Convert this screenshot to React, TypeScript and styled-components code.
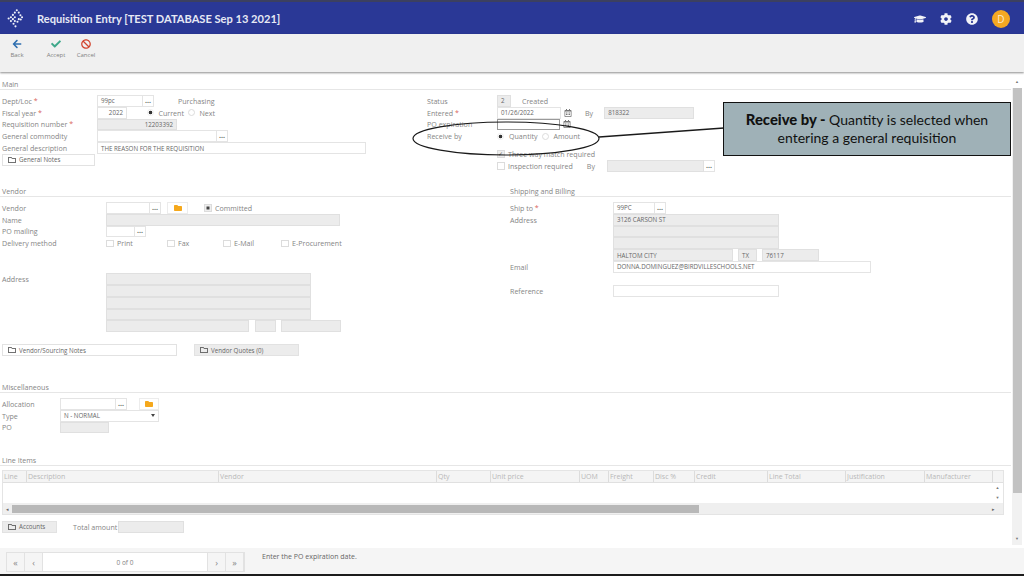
import React from 'react';
import styled, { createGlobalStyle } from 'styled-components';
import { FaArrowLeft, FaBan, FaCheck, FaCog, FaFolder, FaGraduationCap, FaQuestionCircle, FaRegCalendarAlt, FaRegFolder } from 'react-icons/fa';

const GlobalStyle = createGlobalStyle`
  html, body { margin: 0; padding: 0; background: #fff; }
  * { box-sizing: border-box; }
`;

const Page = styled.div`
  position: relative;
  width: 1024px;
  height: 576px;
  overflow: hidden;
  display: flex;
  flex-direction: column;
  font-family: "Open Sans", "Liberation Sans", sans-serif;
  font-size: 7.1px;
  color: #858585;
`;

const Header = styled.header`
  height: 34px;
  flex: none;
  display: flex;
  align-items: center;
  padding: 1px 0 0 7px;
  background: #2a3896;
  border-top: 2px solid #3c4060;
  color: #e6e8f4;
`;

const Title = styled.h1`
  margin: 0 0 0 13px;
  font-family: Lato, "Open Sans", sans-serif;
  font-size: 11.1px;
  font-weight: 700;
  flex: 1;
  white-space: nowrap;
`;

const HeaderIcons = styled.div`
  display: flex;
  align-items: center;
  gap: 14px;
  padding-right: 14px;
  font-size: 12px;
  color: #f2f3f8;
`;

const Avatar = styled.div`
  width: 18px;
  height: 18px;
  border-radius: 50%;
  background: #f4a823;
  color: #fbeccd;
  font-size: 10px;
  display: flex;
  align-items: center;
  justify-content: center;
`;

const Toolbar = styled.div`
  height: 38px;
  flex: none;
  display: flex;
  padding: 5px 0 0 2px;
  background: #f0f0f0;
  box-shadow: 0 1px 2px rgba(0, 0, 0, 0.45);
  z-index: 1;
`;

const ToolButton = styled.div<{ $ml?: number; $color: string }>`
  width: 30px;
  margin-left: ${p => p.$ml ?? 0}px;
  display: flex;
  flex-direction: column;
  align-items: center;
  gap: 2px;
  font-size: 6px;
  color: #808080;
  svg { color: ${p => p.$color}; font-size: 10px; }
`;

const Body = styled.div`
  flex: 1;
  display: flex;
  min-height: 0;
`;

const Content = styled.main`
  width: 1011px;
  flex: none;
  padding-top: 2px;
`;

const Section = styled.section<{ $h: number }>`
  height: ${p => p.$h}px;
`;

const SectionHead = styled.div<{ $left?: number }>`
  height: 16px;
  display: grid;
  grid-template-columns: ${p => p.$left ?? 1011}px 1fr;
  align-items: end;
  padding: 0 0 0.5px 2px;
  border-bottom: 1px solid #e6e6e6;
  line-height: 10px;
`;

const Columns = styled.div<{ $left: number }>`
  display: grid;
  grid-template-columns: ${p => p.$left}px 1fr;
  padding: 5px 0 0 2px;
`;

const Col = styled.div``;

const Row = styled.div`
  height: 11.8px;
  display: flex;
  align-items: center;
  white-space: nowrap;
`;

const Spacer = styled.div<{ $h: number }>`
  height: ${p => p.$h}px;
`;

const Label = styled.span<{ $w: number }>`
  width: ${p => p.$w}px;
  flex: none;
`;

const Req = styled.span`
  color: #d9645c;
`;

const Text = styled.span<{ $ml?: number; $w?: number }>`
  margin-left: ${p => p.$ml ?? 0}px;
  ${p => (p.$w ? `width: ${p.$w}px; flex: none;` : '')}
`;

const Field = styled.div<{ $w: number; $ml?: number; $ro?: boolean; $right?: boolean; $focus?: boolean }>`
  width: ${p => p.$w}px;
  height: 11.8px;
  flex: none;
  margin-left: ${p => p.$ml ?? 0}px;
  padding: 0 3px;
  display: flex;
  align-items: center;
  justify-content: ${p => (p.$right ? 'flex-end' : 'flex-start')};
  background: ${p => (p.$ro ? '#ececec' : '#fff')};
  border: 1px solid ${p => (p.$focus ? '#9a9a9a' : p.$ro ? '#e0e0e0' : '#e4e4e4')};
  font-size: 6.2px;
  color: #666;
  overflow: hidden;
`;

const Dots = styled.div`
  width: 11px;
  height: 11.8px;
  flex: none;
  display: flex;
  align-items: center;
  justify-content: center;
  background: #fff;
  border: 1px solid #e4e4e4;
  border-left: 0;
  font-size: 7px;
  font-weight: 700;
  line-height: 8px;
  color: #555;
`;

const FolderButton = styled.div<{ $ml: number; $w: number }>`
  width: ${p => p.$w}px;
  height: 11.8px;
  flex: none;
  margin-left: ${p => p.$ml}px;
  display: flex;
  align-items: center;
  justify-content: center;
  border: 1px solid #ececec;
  color: #f5a81c;
  font-size: 8px;
`;

const CalendarIcon = styled.span`
  width: 13px;
  flex: none;
  display: flex;
  justify-content: center;
  color: #777;
  font-size: 8px;
`;

const Radio = styled.span<{ $on?: boolean; $ml?: number }>`
  width: 7px;
  height: 7px;
  flex: none;
  margin: 0 5px 0 ${p => p.$ml ?? 0}px;
  border-radius: 50%;
  border: 1px solid ${p => (p.$on ? '#eee' : '#dcdcdc')};
  background: ${p => (p.$on ? 'radial-gradient(circle, #333 0 1.6px, #fff 2.1px)' : '#fff')};
`;

const Check = styled.span<{ $state?: 'tick' | 'square'; $ml?: number }>`
  width: 7.5px;
  height: 7.5px;
  flex: none;
  margin: 0 3.5px 0 ${p => p.$ml ?? 0}px;
  display: flex;
  align-items: center;
  justify-content: center;
  border: 1px solid #dcdcdc;
  background: ${p => (p.$state ? '#eee' : '#fff')};
  font-size: 6px;
  line-height: 6px;
  color: #555;
  &::after {
    content: '${p => (p.$state === 'tick' ? '✓' : '')}';
  }
  ${p => (p.$state === 'square' ? 'box-shadow: inset 0 0 0 1.5px #eee, inset 0 0 0 4px #444;' : '')}
`;

const CheckItem = styled.span<{ $w: number }>`
  width: ${p => p.$w}px;
  flex: none;
  display: flex;
  align-items: center;
`;

const NoteButton = styled.div<{ $w: number; $ml?: number; $grey?: boolean }>`
  width: ${p => p.$w}px;
  height: 11.5px;
  flex: none;
  margin-left: ${p => p.$ml ?? 0}px;
  padding-left: 5px;
  display: flex;
  align-items: center;
  gap: 3px;
  background: ${p => (p.$grey ? '#ececec' : '#fff')};
  border: 1px solid #e2e2e2;
  font-size: 6.2px;
  color: #666;
  svg { font-size: 8px; color: #444; }
`;

const Select = styled(Field)`
  justify-content: space-between;
  &::after {
    content: '';
    border: 2px solid transparent;
    border-top: 3px solid #444;
    border-bottom: 0;
  }
`;

const Table = styled.div`
  width: 1002px;
  height: 45px;
  margin: 4px 0 0 2px;
  border: 1px solid #e4e4e4;
  display: flex;
  flex-direction: column;
`;

const TableHead = styled.div`
  height: 12px;
  flex: none;
  display: flex;
  background: #f4f4f4;
  border-bottom: 1px solid #e0e0e0;
`;

const HeadCell = styled.div<{ $w: number }>`
  width: ${p => p.$w}px;
  flex: none;
  padding-left: 1px;
  border-right: 1px solid #dcdcdc;
  color: #b8b8b8;
  font-size: 7px;
  line-height: 12px;
  white-space: nowrap;
  overflow: hidden;
`;

const TableBody = styled.div`
  flex: 1;
  display: flex;
  justify-content: flex-end;
  background: #fff;
`;

const MiniScroll = styled.div`
  width: 11px;
  display: flex;
  flex-direction: column;
  justify-content: space-between;
  align-items: center;
  padding: 3px 0;
  color: #777;
  font-size: 4px;
  line-height: 4px;
`;

const HScroll = styled.div`
  height: 11px;
  flex: none;
  display: flex;
  align-items: center;
  background: #efefef;
  color: #666;
  font-size: 5px;
`;

const Arrow = styled.span`
  width: 9px;
  flex: none;
  text-align: center;
`;

const HThumb = styled.div`
  width: 687px;
  height: 8px;
  background: #b8b8b8;
`;

const AccountsRow = styled.div`
  display: flex;
  align-items: center;
  margin: 6px 0 0 2px;
`;

const Scrollbar = styled.div`
  width: 10px;
  margin: 4px 0 3px 1px;
  flex: none;
  display: flex;
  flex-direction: column;
  align-items: center;
  color: #777;
  font-size: 4px;
  line-height: 12px;
  background: linear-gradient(#fff 12px, #f1f1f1 12px);
`;

const ScrollThumb = styled.div`
  width: 9px;
  height: 405px;
  background: #c2c2c2;
`;

const ScrollDown = styled.span`
  margin-top: auto;
`;

const Footer = styled.footer`
  height: 28px;
  flex: none;
  display: flex;
  padding-top: 4px;
  background: #f5f5f5;
  border-bottom: 2px solid #1c1c1c;
`;

const Pager = styled.div`
  width: 239px;
  height: 20px;
  margin-left: 6px;
  display: flex;
  border: 1px solid #e2e2e2;
`;

const PageButton = styled.div`
  width: 18px;
  flex: none;
  display: flex;
  align-items: center;
  justify-content: center;
  border-right: 1px solid #e2e2e2;
  color: #888;
  font-size: 9px;
`;

const PageInfo = styled.div`
  flex: 1;
  display: flex;
  align-items: center;
  justify-content: center;
  background: #fff;
  border-right: 1px solid #e2e2e2;
  font-size: 6.5px;
`;

const Message = styled.div`
  margin-left: 17px;
  line-height: 9px;
  font-size: 7px;
  color: #666;
`;

const Annotation = styled.svg`
  position: absolute;
  left: 0;
  top: 0;
  pointer-events: none;
`;

const Callout = styled.div`
  position: absolute;
  left: 723px;
  top: 102px;
  width: 288px;
  height: 54px;
  padding-bottom: 2px;
  display: flex;
  flex-direction: column;
  align-items: center;
  justify-content: center;
  background: #9fb1b7;
  border: 1.5px solid #111;
  font-family: Lato, "Liberation Sans", sans-serif;
  font-size: 14px;
  line-height: 18px;
  color: #111;
  b { font-weight: 900; font-size: 14.8px; }
`;

const columns: [string, number][] = [
  ['Line', 24], ['Description', 192], ['Vendor', 218], ['Qty', 54], ['Unit price', 89], ['UOM', 29],
  ['Freight', 45], ['Disc %', 41], ['Credit', 73], ['Line Total', 78], ['Justification', 79], ['Manufacturer', 68],
];

function Logo() {
  const dots = [
    [15, 1.5], [12, 5], [18, 5], [9, 8.5], [20.5, 9], [6, 12], [12, 12], [23, 12],
    [2.5, 14], [9, 15], [18, 15], [21, 15.5], [6, 18], [12, 18], [16, 19], [10, 22], [13, 26],
  ];
  return (
    <svg width="17" height="19" viewBox="0 0 26 28" fill="#f0f2fa">
      {dots.map(([x, y], i) => <circle key={i} cx={x} cy={y} r={1.6} />)}
    </svg>
  );
}

export default function App() {
  return (
    <Page>
      <GlobalStyle />
      <Header>
        <Logo />
        <Title>Requisition Entry [TEST DATABASE Sep 13 2021]</Title>
        <HeaderIcons>
          <FaGraduationCap />
          <FaCog />
          <FaQuestionCircle />
          <Avatar>D</Avatar>
        </HeaderIcons>
      </Header>
      <Toolbar>
        <ToolButton $color="#2f6fb0"><FaArrowLeft />Back</ToolButton>
        <ToolButton $ml={9} $color="#3ea88a"><FaCheck />Accept</ToolButton>
        <ToolButton $color="#d2452f"><FaBan />Cancel</ToolButton>
      </Toolbar>
      <Body>
        <Content>
          <Section $h={107}>
            <SectionHead>Main</SectionHead>
            <Columns $left={425}>
              <Col>
                <Row><Label $w={95}>Dept/Loc <Req>*</Req></Label><Field $w={46}>99pc</Field><Dots>...</Dots><Text $ml={24}>Purchasing</Text></Row>
                <Row>
                  <Label $w={95}>Fiscal year <Req>*</Req></Label><Field $w={30} $right>2022</Field>
                  <Radio $on $ml={19.5} /><Text $w={29}>Current</Text><Radio />Next
                </Row>
                <Row><Label $w={95}>Requisition number <Req>*</Req></Label><Field $w={80} $ro $right>12203392</Field></Row>
                <Row><Label $w={95}>General commodity</Label><Field $w={120} /><Dots>...</Dots></Row>
                <Row><Label $w={95}>General description</Label><Field $w={269}>THE REASON FOR THE REQUISITION</Field></Row>
                <Row><NoteButton $w={93}><FaRegFolder />General Notes</NoteButton></Row>
              </Col>
              <Col>
                <Row><Label $w={70}>Status</Label><Field $w={14} $ro>2</Field><Text $ml={11}>Created</Text></Row>
                <Row>
                  <Label $w={70}>Entered <Req>*</Req></Label><Field $w={64}>01/26/2022</Field><CalendarIcon><FaRegCalendarAlt /></CalendarIcon>
                  <Text $ml={11}>By</Text><Field $ml={11} $w={90} $ro>818322</Field>
                </Row>
                <Row><Label $w={70}>PO expiration</Label><Field $w={63} $focus /><CalendarIcon><FaRegCalendarAlt /></CalendarIcon></Row>
                <Row>
                  <Label $w={70}>Receive by</Label>
                  <Radio $on /><Text $w={32.5}>Quantity</Text><Radio />Amount
                </Row>
                <Spacer $h={6} />
                <Row><Label $w={70} /><Check $state="tick" />Three way match required</Row>
                <Row>
                  <Label $w={70} /><Check />Inspection required<Text $ml={14}>By</Text>
                  <Field $ml={12} $w={97} $ro /><Dots>...</Dots>
                </Row>
              </Col>
            </Columns>
          </Section>
          <Section $h={196}>
            <SectionHead $left={508}><span>Vendor</span><span>Shipping and Billing</span></SectionHead>
            <Columns $left={508}>
              <Col>
                <Row>
                  <Label $w={104}>Vendor</Label><Field $w={44} /><Dots>...</Dots>
                  <FolderButton $ml={6} $w={21}><FaFolder /></FolderButton>
                  <Check $state="square" $ml={16} />Committed
                </Row>
                <Row><Label $w={104}>Name</Label><Field $w={234} $ro /></Row>
                <Row><Label $w={104}>PO mailing</Label><Field $w={29} /><Dots>...</Dots></Row>
                <Row>
                  <Label $w={104}>Delivery method</Label>
                  <CheckItem $w={61}><Check />Print</CheckItem>
                  <CheckItem $w={56}><Check />Fax</CheckItem>
                  <CheckItem $w={58}><Check />E-Mail</CheckItem>
                  <CheckItem $w={70}><Check />E-Procurement</CheckItem>
                </Row>
                <Spacer $h={24} />
                <Row><Label $w={104}>Address</Label><Field $w={205} $ro /></Row>
                <Row><Label $w={104} /><Field $w={205} $ro /></Row>
                <Row><Label $w={104} /><Field $w={205} $ro /></Row>
                <Row><Label $w={104} /><Field $w={205} $ro /></Row>
                <Row><Label $w={104} /><Field $w={143} $ro /><Field $ml={6} $w={21} $ro /><Field $ml={5} $w={60} $ro /></Row>
                <Spacer $h={12} />
                <Row>
                  <NoteButton $w={175}><FaRegFolder />Vendor/Sourcing Notes</NoteButton>
                  <NoteButton $ml={17} $w={105} $grey><FaRegFolder />Vendor Quotes (0)</NoteButton>
                </Row>
              </Col>
              <Col>
                <Row><Label $w={103}>Ship to <Req>*</Req></Label><Field $w={42}>99PC</Field><Dots>...</Dots></Row>
                <Row><Label $w={103}>Address</Label><Field $w={166} $ro>3126 CARSON ST</Field></Row>
                <Row><Label $w={103} /><Field $w={166} $ro /></Row>
                <Row><Label $w={103} /><Field $w={166} $ro /></Row>
                <Row><Label $w={103} /><Field $w={120} $ro>HALTOM CITY</Field><Field $ml={5} $w={19} $ro>TX</Field><Field $ml={5} $w={57} $ro>76117</Field></Row>
                <Row><Label $w={103}>Email</Label><Field $w={258}>DONNA.DOMINGUEZ@BIRDVILLESCHOOLS.NET</Field></Row>
                <Spacer $h={12} />
                <Row><Label $w={103}>Reference</Label><Field $w={166} /></Row>
              </Col>
            </Columns>
          </Section>
          <Section $h={73}>
            <SectionHead>Miscellaneous</SectionHead>
            <Columns $left={1000}>
              <Col>
                <Row><Label $w={58}>Allocation</Label><Field $w={56} /><Dots>...</Dots><FolderButton $ml={12} $w={20}><FaFolder /></FolderButton></Row>
                <Row><Label $w={58}>Type</Label><Select $w={99}>N - NORMAL</Select></Row>
                <Row><Label $w={58}>PO</Label><Field $w={49} $ro /></Row>
              </Col>
            </Columns>
          </Section>
          <Section $h={94}>
            <SectionHead>Line Items</SectionHead>
            <Table>
              <TableHead>
                {columns.map(([name, w]) => <HeadCell key={name} $w={w}>{name}</HeadCell>)}
              </TableHead>
              <TableBody><MiniScroll><span>▲</span><span>▼</span></MiniScroll></TableBody>
              <HScroll><Arrow>◂</Arrow><HThumb /><Text $ml={293}>▸</Text></HScroll>
            </Table>
            <AccountsRow>
              <NoteButton $w={55} $grey><FaRegFolder />Accounts</NoteButton>
              <Text $ml={16} $w={45}>Total amount</Text>
              <Field $w={66} $ro />
            </AccountsRow>
          </Section>
        </Content>
        <Scrollbar>
          <span>▲</span>
          <ScrollThumb />
          <ScrollDown>▼</ScrollDown>
        </Scrollbar>
      </Body>
      <Footer>
        <Pager>
          <PageButton>«</PageButton>
          <PageButton>‹</PageButton>
          <PageInfo>0 of 0</PageInfo>
          <PageButton>›</PageButton>
          <PageButton>»</PageButton>
        </Pager>
        <Message>Enter the PO expiration date.</Message>
      </Footer>
      <Annotation width="1024" height="576" viewBox="0 0 1024 576" fill="none" stroke="#1a1a1a">
        <ellipse cx="506" cy="138.5" rx="93" ry="16.5" strokeWidth="1.2" />
        <line x1="599" y1="137" x2="724" y2="128" strokeWidth="1.5" />
      </Annotation>
      <Callout>
        <div><b>Receive by -</b> Quantity is selected when</div>
        <div>entering a general requisition</div>
      </Callout>
    </Page>
  );
}
